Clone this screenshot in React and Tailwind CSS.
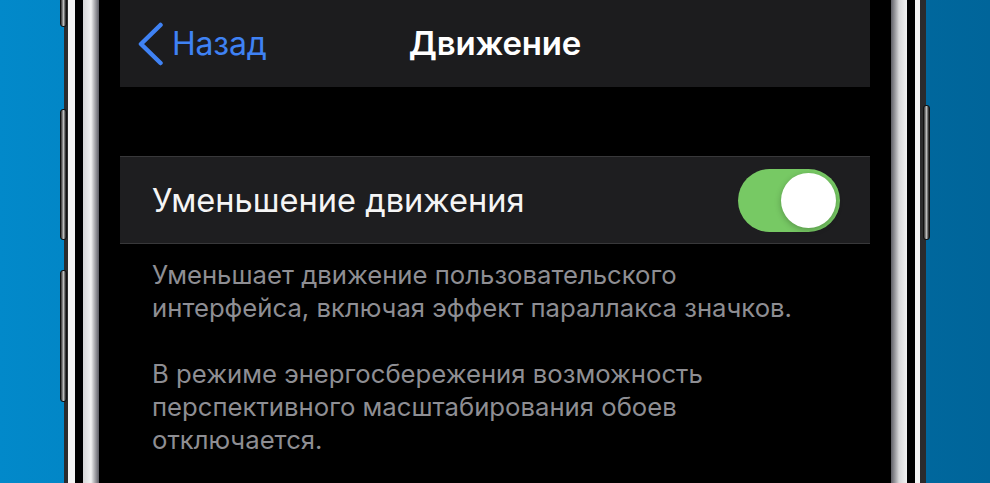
import React from "react";

const SideButton = ({ top, height, side }) => (
  <div
    className={`absolute w-[7px] rounded-[3px] border border-[#111] bg-gradient-to-r from-[#333] via-[#bdbdbd] to-[#1a1a1a] ${side === "left" ? "right-[-3px]" : "left-[-3px]"}`}
    style={{ top, height }}
  />
);

const Toggle = ({ on }) => (
  <div className={`flex h-[63px] w-[102px] items-center rounded-full p-[4px] ${on ? "justify-end bg-[#77c964]" : "justify-start bg-[#39393d]"}`}>
    <div className="h-[55px] w-[55px] rounded-full bg-white shadow-[0_2px_6px_rgba(0,0,0,0.25)]" />
  </div>
);

const App = () => {
  return (
    <div
      className="flex h-[483px] w-[990px] overflow-hidden bg-gradient-to-r from-[#0289ca] to-[#00659a]"
      style={{ fontFamily: "Inter, 'Noto Sans', sans-serif" }}
    >
      {/* left edge with buttons */}
      <div className="relative w-[64px] shrink-0">
        <SideButton side="left" top={-10} height={37} />
        <SideButton side="left" top={109} height={131} />
        <SideButton side="left" top={270} height={132} />
      </div>
      <div className="w-[4px] shrink-0 bg-[#2b2b2d]" />
      <div className="w-[7px] shrink-0 bg-[#f4f4f4]" />
      <div className="w-[8px] shrink-0 bg-black" />
      <div className="w-[16px] shrink-0 bg-gradient-to-r from-[#d6d6d8] via-[#f2f2f2] to-[#5f5f66]" />

      {/* screen */}
      <div className="w-[792px] shrink-0 bg-black px-[21px]">
        <div className="flex h-full flex-col">
          <header className="relative flex h-[87px] shrink-0 items-center justify-center bg-[#1c1c1e]">
            <button className="absolute left-[18px] top-0 flex h-full items-center gap-[8px] text-[#3f82f4]">
              <svg width="26" height="44" viewBox="0 0 26 44" fill="none">
                <path d="M22.5 3 L3 22 L22.5 41" stroke="currentColor" strokeWidth="4.5" strokeLinecap="round" strokeLinejoin="round" />
              </svg>
              <span className="text-[32px] leading-none tracking-[-0.2px]">Назад</span>
            </button>
            <h1 className="text-[33px] font-semibold leading-none text-white tracking-[-0.2px]">Движение</h1>
          </header>

          <div className="h-[69px] shrink-0" />

          <div className="flex h-[88px] shrink-0 items-center justify-between border-y border-[#38383a] bg-[#1e1e20] pl-[32px] pr-[30px]">
            <span className="text-[32.6px] text-[#f5f5f5]">Уменьшение движения</span>
            <Toggle on />
          </div>

          <div className="flex flex-col gap-[33px] pl-[32px] pt-[14px] text-[25.7px] leading-[33px] text-[#8e8e93]">
            <p>
              Уменьшает движение пользовательского
              <br />
              интерфейса, включая эффект параллакса значков.
            </p>
            <p>
              В режиме энергосбережения возможность
              <br />
              перспективного масштабирования обоев
              <br />
              отключается.
            </p>
          </div>
        </div>
      </div>

      <div className="w-[16px] shrink-0 bg-gradient-to-r from-[#5f5f66] via-[#d8d8da] to-[#f2f2f2]" />
      <div className="w-[8px] shrink-0 bg-black" />
      <div className="w-[5px] shrink-0 bg-[#f4f4f4]" />
      <div className="w-[6px] shrink-0 bg-[#2b2b2d]" />
      {/* right edge with button */}
      <div className="relative flex-1">
        <SideButton side="right" top={105} height={135} />
      </div>
    </div>
  );
};

export default App;
